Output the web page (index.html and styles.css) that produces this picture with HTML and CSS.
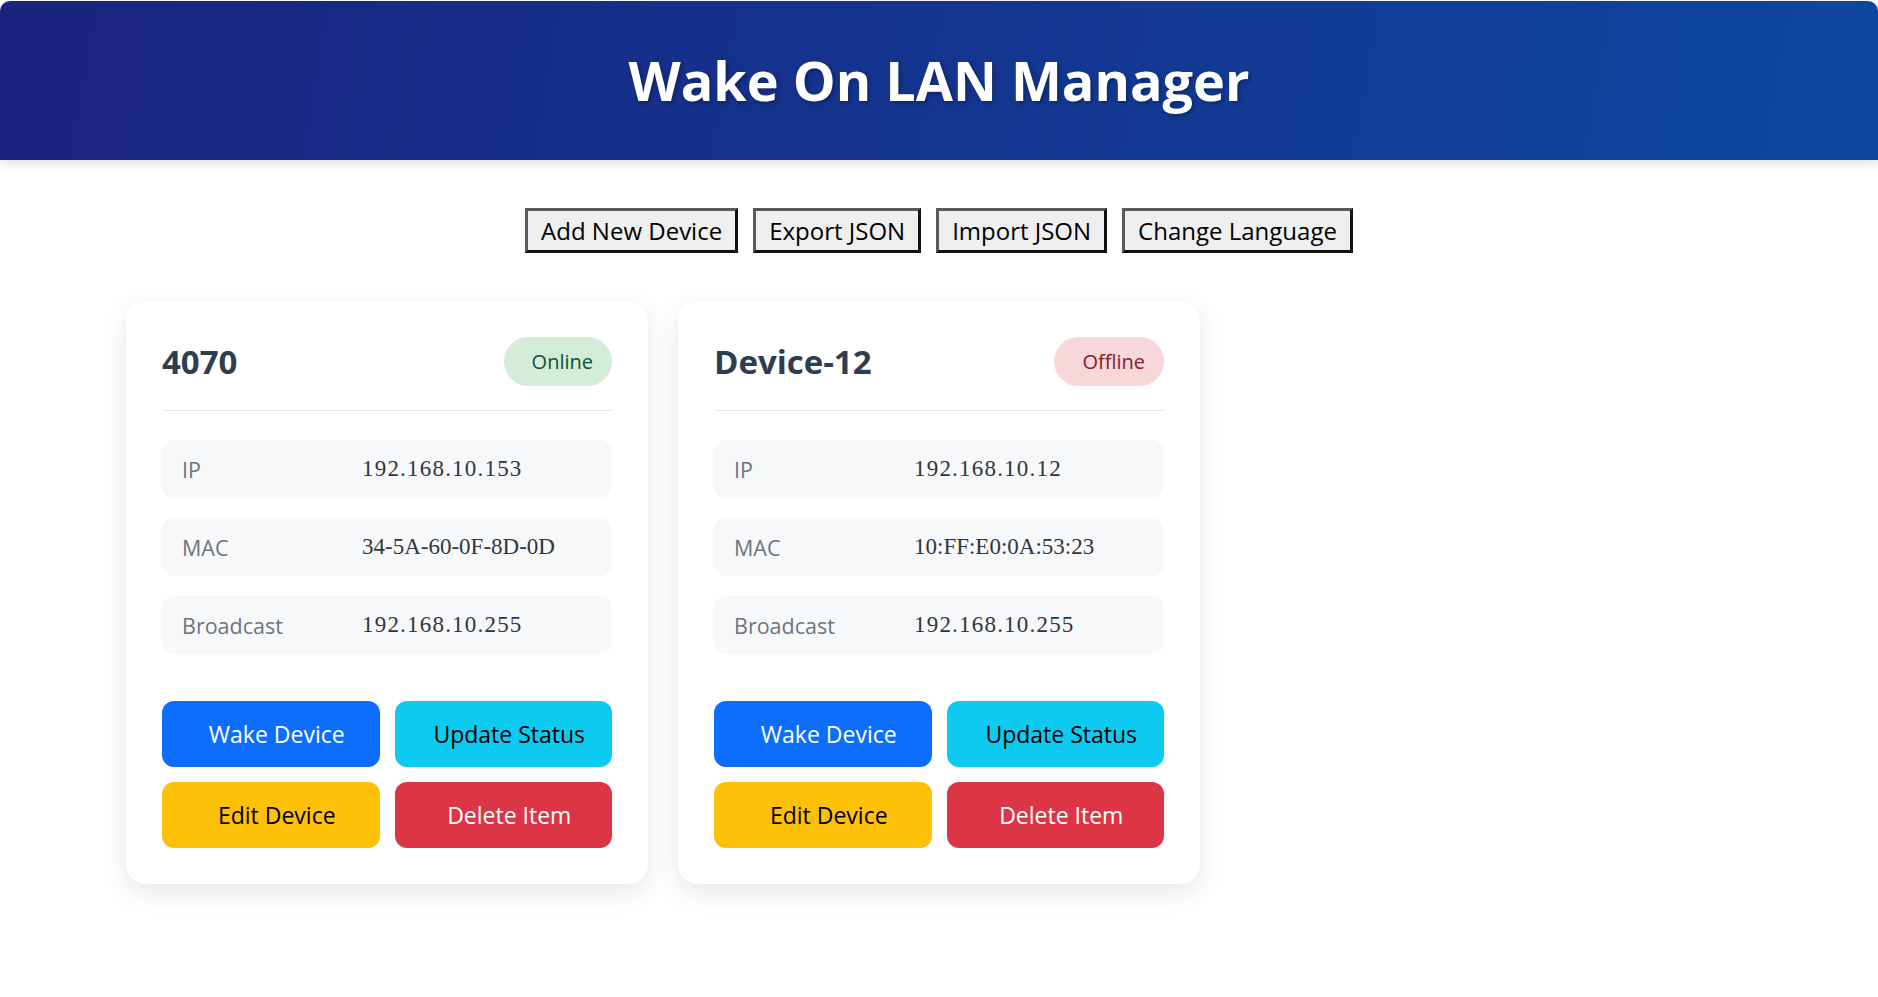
FILE: index.html
```html
<!DOCTYPE html>
<html lang="en">
<head>
<meta charset="utf-8">
<title>Wake On LAN Manager</title>
<link rel="stylesheet" href="styles.css">
</head>
<body>
<header class="app-header">
  <h1 class="app-title">Wake On LAN Manager</h1>
</header>

<div class="toolbar">
  <button class="tool-btn">Add New Device</button>
  <button class="tool-btn">Export JSON</button>
  <button class="tool-btn">Import JSON</button>
  <button class="tool-btn">Change Language</button>
</div>

<main class="device-grid">
  <section class="device-card">
    <div class="card-head">
      <h3 class="device-name">4070</h3>
      <span class="status status-online">Online</span>
    </div>
    <div class="info-list">
      <div class="info-row"><span class="info-label">IP</span><span class="info-value ip">192.168.10.153</span></div>
      <div class="info-row"><span class="info-label">MAC</span><span class="info-value">34-5A-60-0F-8D-0D</span></div>
      <div class="info-row"><span class="info-label">Broadcast</span><span class="info-value ip">192.168.10.255</span></div>
    </div>
    <div class="actions">
      <button class="act act-wake">Wake Device</button>
      <button class="act act-update">Update Status</button>
      <button class="act act-edit">Edit Device</button>
      <button class="act act-delete">Delete Item</button>
    </div>
  </section>

  <section class="device-card">
    <div class="card-head">
      <h3 class="device-name">Device-12</h3>
      <span class="status status-offline">Offline</span>
    </div>
    <div class="info-list">
      <div class="info-row"><span class="info-label">IP</span><span class="info-value ip">192.168.10.12</span></div>
      <div class="info-row"><span class="info-label">MAC</span><span class="info-value">10:FF:E0:0A:53:23</span></div>
      <div class="info-row"><span class="info-label">Broadcast</span><span class="info-value ip">192.168.10.255</span></div>
    </div>
    <div class="actions">
      <button class="act act-wake">Wake Device</button>
      <button class="act act-update">Update Status</button>
      <button class="act act-edit">Edit Device</button>
      <button class="act act-delete">Delete Item</button>
    </div>
  </section>
</main>
</body>
</html>
```

FILE: styles.css
```css
* { box-sizing: border-box; }

html, body {
  margin: 0;
  padding: 0;
  background: #ffffff;
  font-family: "Open Sans", "Noto Sans", sans-serif;
}

.app-header {
  margin-top: 1px;
  height: 159px;
  display: flex;
  align-items: center;
  justify-content: center;
  background: linear-gradient(100deg, #1a237e 0%, #0d47a1 100%);
  border-radius: 10px 10px 0 0;
  box-shadow: 0 4px 12px rgba(0, 0, 0, 0.12);
}

.app-title {
  margin: 0;
  font-family: "Open Sans", sans-serif;
  font-weight: 700;
  font-size: 54px;
  line-height: 1.2;
  color: #ffffff;
  text-shadow: 2px 2px 4px rgba(0, 0, 0, 0.3);
}

.toolbar {
  margin-top: 48px;
  display: flex;
  justify-content: center;
  gap: 15px;
}

.tool-btn {
  font-family: "Open Sans", sans-serif;
  font-size: 24px;
  line-height: 33px;
  padding: 3px 13px;
  color: #000;
  background: #efefef;
  border: 3px solid;
  border-color: #5a5a5a #111111 #111111 #5a5a5a;
  border-radius: 0;
  cursor: pointer;
}

.device-grid {
  max-width: 1626px;
  margin: 48px auto 0;
  padding-bottom: 60px;
  display: grid;
  grid-template-columns: repeat(3, 1fr);
  gap: 30px;
  align-items: start;
}

.device-card {
  background: #ffffff;
  border-radius: 20px;
  padding: 36px;
  box-shadow: 0 8px 26px rgba(0, 0, 0, 0.1);
}

.card-head {
  display: flex;
  align-items: center;
  justify-content: space-between;
  padding-bottom: 24px;
  border-bottom: 1px solid #e6e8ea;
}

.device-name {
  margin: 0;
  font-weight: 700;
  font-size: 33px;
  line-height: 1.2;
  color: #2c3e50;
}

.status {
  display: inline-block;
  font-size: 20px;
  line-height: 27px;
  padding: 11px 19px 11px 28px;
  border-radius: 999px;
}

.status-online {
  background: #d4edda;
  color: #0f5132;
}

.status-offline {
  background: #f8d7da;
  color: #842029;
}

.info-list {
  margin-top: 29px;
  display: flex;
  flex-direction: column;
  gap: 20px;
}

.info-row {
  height: 58px;
  display: flex;
  align-items: center;
  padding: 0 20px;
  background: #f7f8fa;
  border-radius: 12px;
}

.info-label {
  width: 180px;
  flex: none;
  font-size: 21.5px;
  color: #6c757d;
}

.info-value {
  font-family: "Liberation Serif", "Times New Roman", serif;
  font-size: 23px;
  color: #2f3640;
}

.info-value.ip {
  letter-spacing: 1.2px;
}

.actions {
  margin-top: 47px;
  display: grid;
  grid-template-columns: 1fr 1fr;
  gap: 15px;
}

.act {
  height: 66px;
  border: none;
  border-radius: 12px;
  padding: 0 0 0 12px;
  font-family: "Open Sans", sans-serif;
  font-size: 23px;
  cursor: pointer;
}

.act-wake { background: #0d6efd; color: #ffffff; }
.act-update { background: #0dcaf0; color: #000000; }
.act-edit { background: #ffc107; color: #000000; }
.act-delete { background: #dc3545; color: #ffffff; }
```
